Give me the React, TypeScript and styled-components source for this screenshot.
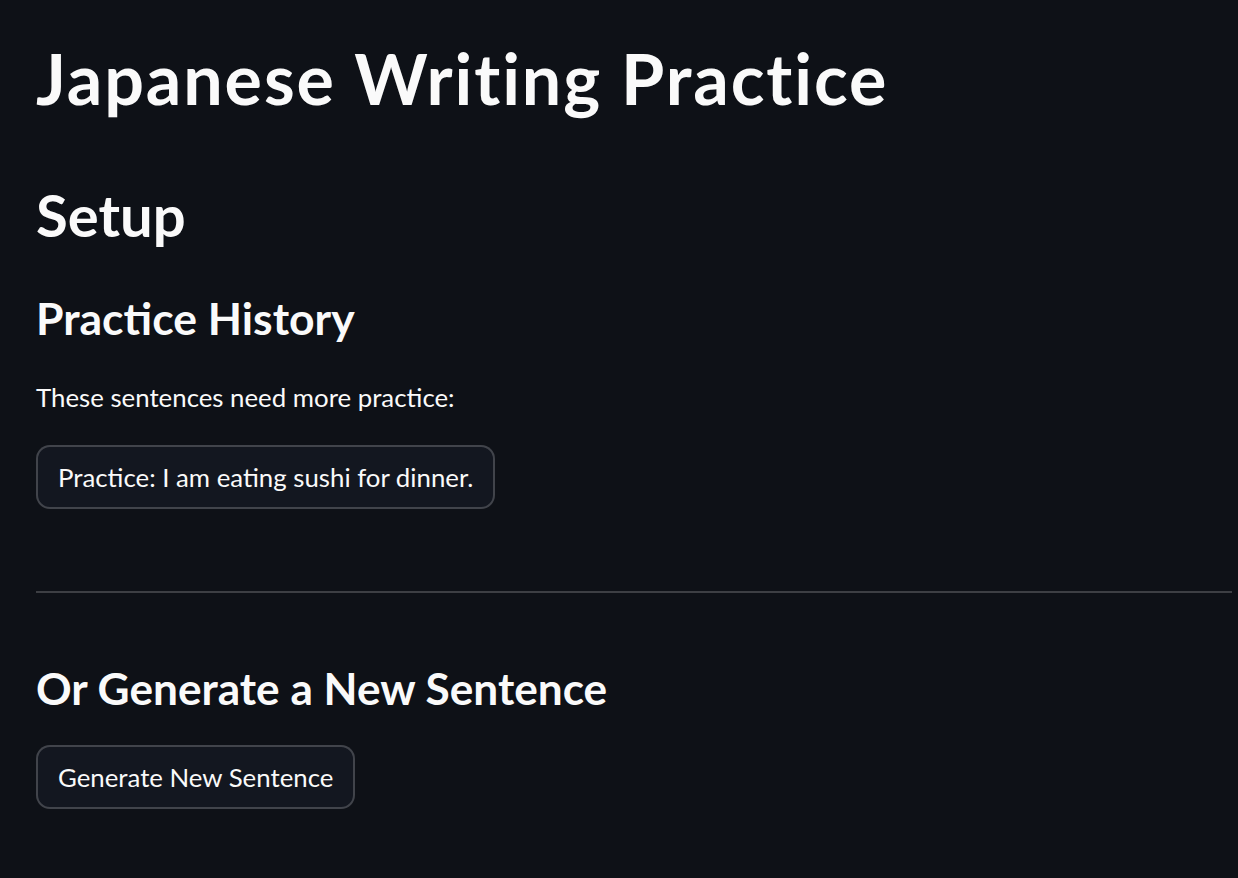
import styled, { createGlobalStyle } from "styled-components";

const GlobalStyle = createGlobalStyle`
  body {
    margin: 0;
    background: #0e1117;
    color: #fafafa;
    font-family: Lato, "Noto Sans", sans-serif;
  }
`;

const Main = styled.main`
  padding: 34px 6px 60px 36px;
`;

const Title = styled.h1`
  margin: 0;
  font-size: 70px;
  font-weight: 700;
  line-height: 88px;
  letter-spacing: 1.9px;
`;

const Heading = styled.h2<{ $size: number; $top: number }>`
  margin: ${(p) => p.$top}px 0 0;
  font-size: ${(p) => p.$size}px;
  font-weight: 700;
  line-height: 1.3;
`;

const Text = styled.p`
  margin: 32px 0 0;
  font-size: 25.8px;
  line-height: 1.4;
`;

const Button = styled.button<{ $top: number }>`
  display: block;
  box-sizing: border-box;
  margin-top: ${(p) => p.$top}px;
  height: 64px;
  padding: 0 20px;
  border: 2px solid rgba(250, 250, 250, 0.2);
  border-radius: 14px;
  background: #131720;
  color: #fafafa;
  font-family: inherit;
  font-size: 25.8px;
  cursor: pointer;
`;

const Divider = styled.hr`
  margin: 82px 0 0;
  border: none;
  border-top: 2px solid rgba(250, 250, 250, 0.2);
`;

export default function App() {
  return (
    <>
      <GlobalStyle />
      <Main>
        <Title>Japanese Writing Practice</Title>
        <Heading $size={58} $top={55}>Setup</Heading>
        <Heading $size={44.5} $top={37}>Practice History</Heading>
        <Text>These sentences need more practice:</Text>
        <Button $top={30}>Practice: I am eating sushi for dinner.</Button>
        <Divider />
        <Heading $size={44.2} $top={66}>Or Generate a New Sentence</Heading>
        <Button $top={28}>Generate New Sentence</Button>
      </Main>
    </>
  );
}
